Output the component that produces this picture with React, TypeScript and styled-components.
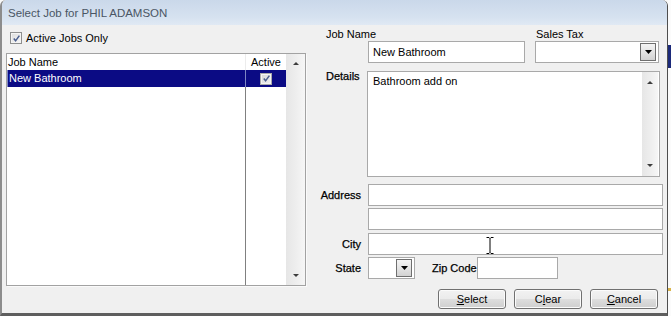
import React from "react";
import styled, { createGlobalStyle } from "styled-components";

const Global = createGlobalStyle`
  html, body { margin: 0; padding: 0; background: #fff; }
  body { font-family: "Liberation Sans", Arial, sans-serif; font-size: 11px; color: #000; }
  * { box-sizing: border-box; }
`;

const Screen = styled.div`
  display: flex;
  width: 671px;
  height: 316px;
  overflow: hidden;
  background: #f9f9f9;
`;

const Window = styled.div`
  width: 668px;
  height: 316px;
  flex: none;
  display: flex;
  flex-direction: column;
  background: #f0f0f0;
  border-left: 2px solid #8c8c8c;
  border-right: 1px solid #4e4e4e;
  border-bottom: 3px solid #5e5e5e;
  border-radius: 6px 6px 0 0;
  overflow: hidden;
`;

const OtherStrip = styled.div`
  flex: 1;
  display: flex;
  flex-direction: column;
  background: #fbfbfb;
`;

const OtherBit = styled.div<{ $top: number; $h: number; $c: string }>`
  margin-top: ${(p) => p.$top}px;
  height: ${(p) => p.$h}px;
  background: ${(p) => p.$c};
`;

const TitleBar = styled.div`
  height: 25px;
  flex: none;
  display: flex;
  align-items: center;
  padding-left: 6px;
  background: linear-gradient(to bottom, #cad8ea 0%, #d6e2f0 70%, #e0e9f4 100%);
  color: #4a5664;
  font-size: 11.5px;
`;

const Body = styled.div`
  flex: 1;
  display: flex;
`;

const LeftPane = styled.div`
  width: 303px;
  flex: none;
  display: flex;
  flex-direction: column;
  padding: 6px 0 0 4px;
`;

const CheckRow = styled.label`
  display: flex;
  align-items: center;
  gap: 4px;
  height: 14px;
  margin-left: 4px;
`;

const CheckBox = styled.span<{ $size: number; $dim?: boolean }>`
  width: ${(p) => p.$size}px;
  height: ${(p) => p.$size}px;
  flex: none;
  display: flex;
  align-items: center;
  justify-content: center;
  border: 1px solid ${(p) => (p.$dim ? "#a9a9a9" : "#8e8f8f")};
  background: ${(p) =>
    p.$dim
      ? "linear-gradient(135deg, #d6d6d6, #f0f0f0)"
      : "linear-gradient(135deg, #dcdcdc, #f7f7f7)"};
  box-shadow: inset 0 0 0 1px #f4f4f4;
`;

const List = styled.div`
  margin-top: 8px;
  width: 300px;
  height: 233px;
  display: flex;
  background: #fff;
  border: 1px solid #a2a2a2;
  box-shadow: 1px 1px 0 #fafafa;
`;

const Grid = styled.div`
  flex: 1;
  display: flex;
  flex-direction: column;
`;

const HeaderRow = styled.div`
  height: 16px;
  display: flex;
  line-height: 16px;
`;

const NameCol = styled.div<{ $line: string }>`
  width: 239px;
  flex: none;
  padding-left: 1px;
  border-right: 1px solid ${(p) => p.$line};
`;

const ActiveCol = styled.div`
  flex: 1;
  display: flex;
  align-items: center;
  justify-content: center;
`;

const SelectedRow = styled.div`
  height: 17px;
  display: flex;
  line-height: 16px;
  background: #0b0b84;
  color: #fff;
`;

const FocusCell = styled(NameCol)`
  border-left: 1px solid #7d86c4;
  padding-left: 1px;
`;

const Filler = styled.div`
  flex: 1;
  display: flex;
`;

const ScrollBar = styled.div<{ $w: number; $pad: number }>`
  width: ${(p) => p.$w}px;
  flex: none;
  display: flex;
  flex-direction: column;
  justify-content: space-between;
  align-items: center;
  padding: ${(p) => p.$pad}px 0;
  background: linear-gradient(to right, #e6e6e6, #efefef 60%, #f6f6f6);
`;

const Arrow = styled.span<{ $down?: boolean }>`
  width: 0;
  height: 0;
  border-left: 3px solid transparent;
  border-right: 3px solid transparent;
  ${(p) =>
    p.$down ? "border-top: 3px solid #3c3c3c;" : "border-bottom: 3px solid #3c3c3c;"}
`;

const RightPane = styled.div`
  flex: 1;
  display: flex;
  flex-direction: column;
  padding: 4px 0 0 15px;
`;

const LabelRow = styled.div`
  height: 11px;
  line-height: 11px;
  display: flex;
`;

const TopLabel = styled.span<{ $w?: number; $pl?: number }>`
  width: ${(p) => (p.$w ? `${p.$w}px` : "auto")};
  padding-left: ${(p) => p.$pl ?? 0}px;
`;

const Row = styled.div<{ $mt: number; $indent?: number }>`
  display: flex;
  align-items: center;
  margin-top: ${(p) => p.$mt}px;
  padding-left: ${(p) => p.$indent ?? 0}px;
`;

const SideLabel = styled.span`
  width: 48px;
  flex: none;
  padding-right: 7px;
  text-align: right;
  -webkit-text-stroke: 0.25px #000;
`;

const Field = styled.div<{ $w: number; $h?: number }>`
  position: relative;
  width: ${(p) => p.$w}px;
  height: ${(p) => p.$h ?? 22}px;
  flex: none;
  display: flex;
  align-items: center;
  padding-left: 4px;
  background: #fff;
  border: 1px solid #a9a9a9;
`;

const Combo = styled(Field)`
  justify-content: flex-end;
  padding: 0 2px 0 0;
`;

const DropBtn = styled.span`
  width: 16px;
  height: 18px;
  display: flex;
  align-items: center;
  justify-content: center;
  border: 1px solid #6f6f6f;
  background: linear-gradient(to bottom, #f4f4f4, #e4e4e4 50%, #d2d2d2);
`;

const DetailsRow = styled.div`
  display: flex;
  margin-top: 8px;
`;

const DetailsLabel = styled.span`
  width: 47px;
  flex: none;
  padding: 0 0 0 6px;
  line-height: 11px;
  -webkit-text-stroke: 0.25px #000;
`;

const Memo = styled.div`
  width: 293px;
  height: 106px;
  display: flex;
  background: #fff;
  border: 1px solid #a9a9a9;
`;

const MemoText = styled.div`
  flex: 1;
  padding: 3px 0 0 5px;
  line-height: 13px;
`;

const MemoScroll = styled(ScrollBar)`
  margin: 0 1px 0 0;
`;

const ZipLabel = styled.span`
  margin-left: 17px;
  width: 45px;
  flex: none;
  -webkit-text-stroke: 0.25px #000;
`;

const ButtonRow = styled.div`
  display: flex;
  gap: 8px;
  margin-top: 10px;
  padding-left: 118px;
`;

const Button = styled.button`
  width: 68px;
  height: 20px;
  padding: 0;
  font-family: "Liberation Sans", Arial, sans-serif;
  font-size: 11px;
  color: #000;
  border: 1px solid #707070;
  border-radius: 3px;
  background: linear-gradient(to bottom, #f2f2f2 0%, #ebebeb 48%, #dddddd 52%, #cfcfcf 100%);
  box-shadow: inset 0 0 0 1px #fbfbfb;
`;

const IBeam = styled.svg`
  position: absolute;
  left: 117px;
  top: 3px;
`;

const Check = ({ size }: { size: number }) => (
  <svg width={size} height={size} viewBox="0 0 10 10">
    <path d="M2 5 L4 7.6 L8.2 1.8" fill="none" stroke="#4b5f8f" strokeWidth="1.7" />
  </svg>
);

const DownTri = () => (
  <svg width="7" height="4" viewBox="0 0 7 4">
    <polygon points="0,0 7,0 3.5,4" fill="#000" />
  </svg>
);

export default function App() {
  return (
    <>
      <Global />
      <Screen>
        <Window>
          <TitleBar>Select Job for PHIL ADAMSON</TitleBar>
          <Body>
            <LeftPane>
              <CheckRow>
                <CheckBox $size={12}>
                  <Check size={9} />
                </CheckBox>
                Active Jobs Only
              </CheckRow>
              <List>
                <Grid>
                  <HeaderRow>
                    <NameCol $line="#ececec">Job Name</NameCol>
                    <ActiveCol>Active</ActiveCol>
                  </HeaderRow>
                  <SelectedRow>
                    <FocusCell $line="#7d86c4">New Bathroom</FocusCell>
                    <ActiveCol>
                      <CheckBox $size={12} $dim>
                        <Check size={9} />
                      </CheckBox>
                    </ActiveCol>
                  </SelectedRow>
                  <Filler>
                    <NameCol $line="#808080" />
                  </Filler>
                </Grid>
                <ScrollBar $w={19} $pad={8}>
                  <Arrow />
                  <Arrow $down />
                </ScrollBar>
              </List>
            </LeftPane>
            <RightPane>
              <LabelRow>
                <TopLabel $w={216} $pl={6}>Job Name</TopLabel>
                <TopLabel>Sales Tax</TopLabel>
              </LabelRow>
              <Row $mt={1} $indent={48}>
                <Field $w={157}>New Bathroom</Field>
                <Combo $w={124} style={{ marginLeft: 10 }}>
                  <DropBtn>
                    <DownTri />
                  </DropBtn>
                </Combo>
              </Row>
              <DetailsRow>
                <DetailsLabel>Details</DetailsLabel>
                <Memo>
                  <MemoText>Bathroom add on</MemoText>
                  <MemoScroll $w={16} $pad={9}>
                    <Arrow />
                    <Arrow $down />
                  </MemoScroll>
                </Memo>
              </DetailsRow>
              <Row $mt={7}>
                <SideLabel>Address</SideLabel>
                <Field $w={295} />
              </Row>
              <Row $mt={2} $indent={48}>
                <Field $w={295} />
              </Row>
              <Row $mt={3}>
                <SideLabel>City</SideLabel>
                <Field $w={295}>
                  <IBeam width="8" height="17" viewBox="0 0 8 17">
                    <path d="M0.5 0.5 H3 L4 1.5 L5 0.5 H7.5 M4 1.5 V15.5 M0.5 16.5 H3 L4 15.5 L5 16.5 H7.5" fill="none" stroke="#000" strokeWidth="1" />
                  </IBeam>
                </Field>
              </Row>
              <Row $mt={2}>
                <SideLabel>State</SideLabel>
                <Combo $w={47}>
                  <DropBtn>
                    <DownTri />
                  </DropBtn>
                </Combo>
                <ZipLabel>Zip Code</ZipLabel>
                <Field $w={81} />
              </Row>
              <ButtonRow>
                <Button>
                  <u>S</u>elect
                </Button>
                <Button>
                  C<u>l</u>ear
                </Button>
                <Button>
                  <u>C</u>ancel
                </Button>
              </ButtonRow>
            </RightPane>
          </Body>
        </Window>
        <OtherStrip>
          <OtherBit $top={45} $h={23} $c="#1c2a7a" />
          <OtherBit $top={220} $h={3} $c="#d9b44a" />
        </OtherStrip>
      </Screen>
    </>
  );
}
